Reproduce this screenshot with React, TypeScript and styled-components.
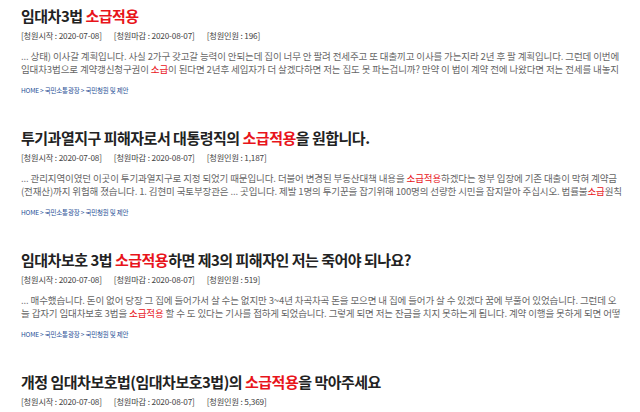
import * as React from 'react';
import styled, { createGlobalStyle } from 'styled-components';

const GlobalStyle = createGlobalStyle`
  html, body {
    margin: 0;
    padding: 0;
    background: #fff;
  }

  body {
    font-family: "Noto Sans CJK KR", "Noto Sans", sans-serif;
    overflow: hidden;
  }
`;

interface Petition {
  title: React.ReactNode;
  start: string;
  end: string;
  count: string;
  lines: React.ReactNode[];
}

const Hl = styled.em`
  font-style: normal;
  color: #e8141b;
`;

const petitions: Petition[] = [
  {
    title: <>임대차3법 <Hl>소급적용</Hl></>,
    start: '2020-07-08',
    end: '2020-08-07',
    count: '196',
    lines: [
      <>... 상태) 이사갈 계획입니다. 사실 2가구 갖고갈 능력이 안되는데 집이 너무 안 팔려 전세주고 또 대출끼고 이사를 가는지라 2년 후 팔 계획입니다. 그런데 이번에</>,
      <>임대차3법으로 계약갱신청구권이 <Hl>소급</Hl>이 된다면 2년후 세입자가 더 살겠다하면 저는 집도 못 파는겁니까? 만약 이 법이 계약 전에 나왔다면 저는 전세를 내놓지</>,
    ],
  },
  {
    title: <>투기과열지구 피해자로서 대통령직의 <Hl>소급적용</Hl>을 원합니다.</>,
    start: '2020-07-08',
    end: '2020-08-07',
    count: '1,187',
    lines: [
      <>... 관리지역이였던 이곳이 투기과열지구로 지정 되었기 때문입니다. 더불어 변경된 부동산대책 내용을 <Hl>소급적용</Hl>하겠다는 정부 입장에 기존 대출이 막혀 계약금</>,
      <>(전재산)까지 위험해 졌습니다. 1. 김현미 국토부장관은 ... 곳입니다. 제발 1명의 투기꾼을 잡기위해 100명의 선량한 시민을 잡지말아 주십시오. 법률불<Hl>소급</Hl>원칙</>,
    ],
  },
  {
    title: <>임대차보호 3법 <Hl>소급적용</Hl>하면 제3의 피해자인 저는 죽어야 되나요?</>,
    start: '2020-07-08',
    end: '2020-08-07',
    count: '519',
    lines: [
      <>... 매수했습니다. 돈이 없어 당장 그 집에 들어가서 살 수는 없지만 3~4년 차곡차곡 돈을 모으면 내 집에 들어가 살 수 있겠다 꿈에 부풀어 있었습니다. 그런데 오</>,
      <>늘 갑자기 임대차보호 3법을 <Hl>소급적용</Hl> 할 수 도 있다는 기사를 접하게 되었습니다. 그렇게 되면 저는 잔금을 치지 못하는게 됩니다. 계약 이행을 못하게 되면 어떻</>,
    ],
  },
  {
    title: <>개정 임대차보호법(임대차보호3법)의 <Hl>소급적용</Hl>을 막아주세요</>,
    start: '2020-07-08',
    end: '2020-08-07',
    count: '5,369',
    lines: [],
  },
];

const Page = styled.div`
  display: flex;
  flex-direction: column;
  padding: 6px 0 0 21px;
  width: 640px;
  height: 412px;
  box-sizing: border-box;
  overflow: hidden;
`;

const Item = styled.section`
  display: flex;
  flex-direction: column;
  height: 122px;
  flex-shrink: 0;
`;

const Title = styled.h2`
  margin: 0;
  font-size: 15px;
  line-height: 20px;
  font-weight: bold;
  color: #222;
  letter-spacing: -0.5px;
  white-space: nowrap;
`;

const Meta = styled.div`
  display: flex;
  gap: 12px;
  margin-top: 3px;
  font-size: 8.2px;
  line-height: 12px;
  color: #444;
  letter-spacing: -0.15px;
`;

const Body = styled.div`
  margin-top: 9px;
  width: 610px;
  font-size: 9.5px;
  line-height: 13px;
  color: #666;
  letter-spacing: -0.12px;

  > div {
    white-space: nowrap;
    overflow: hidden;
  }
`;

const Crumb = styled.div`
  margin-top: 9px;
  font-size: 6.5px;
  line-height: 10px;
  color: #1f4f96;
  letter-spacing: -0.2px;
`;

export default function App() {
  return (
    <>
      <GlobalStyle />
      <Page>
        {petitions.map((p, i) => (
          <Item key={i}>
            <Title>{p.title}</Title>
            <Meta>
              <span>[청원시작 : {p.start}]</span>
              <span>[청원마감 : {p.end}]</span>
              <span>[청원인원 : {p.count}]</span>
            </Meta>
            {p.lines.length > 0 && (
              <>
                <Body>
                  {p.lines.map((line, j) => (
                    <div key={j}>{line}</div>
                  ))}
                </Body>
                <Crumb>HOME &gt; 국민소통광장 &gt; 국민청원 및 제안</Crumb>
              </>
            )}
          </Item>
        ))}
      </Page>
    </>
  );
}
